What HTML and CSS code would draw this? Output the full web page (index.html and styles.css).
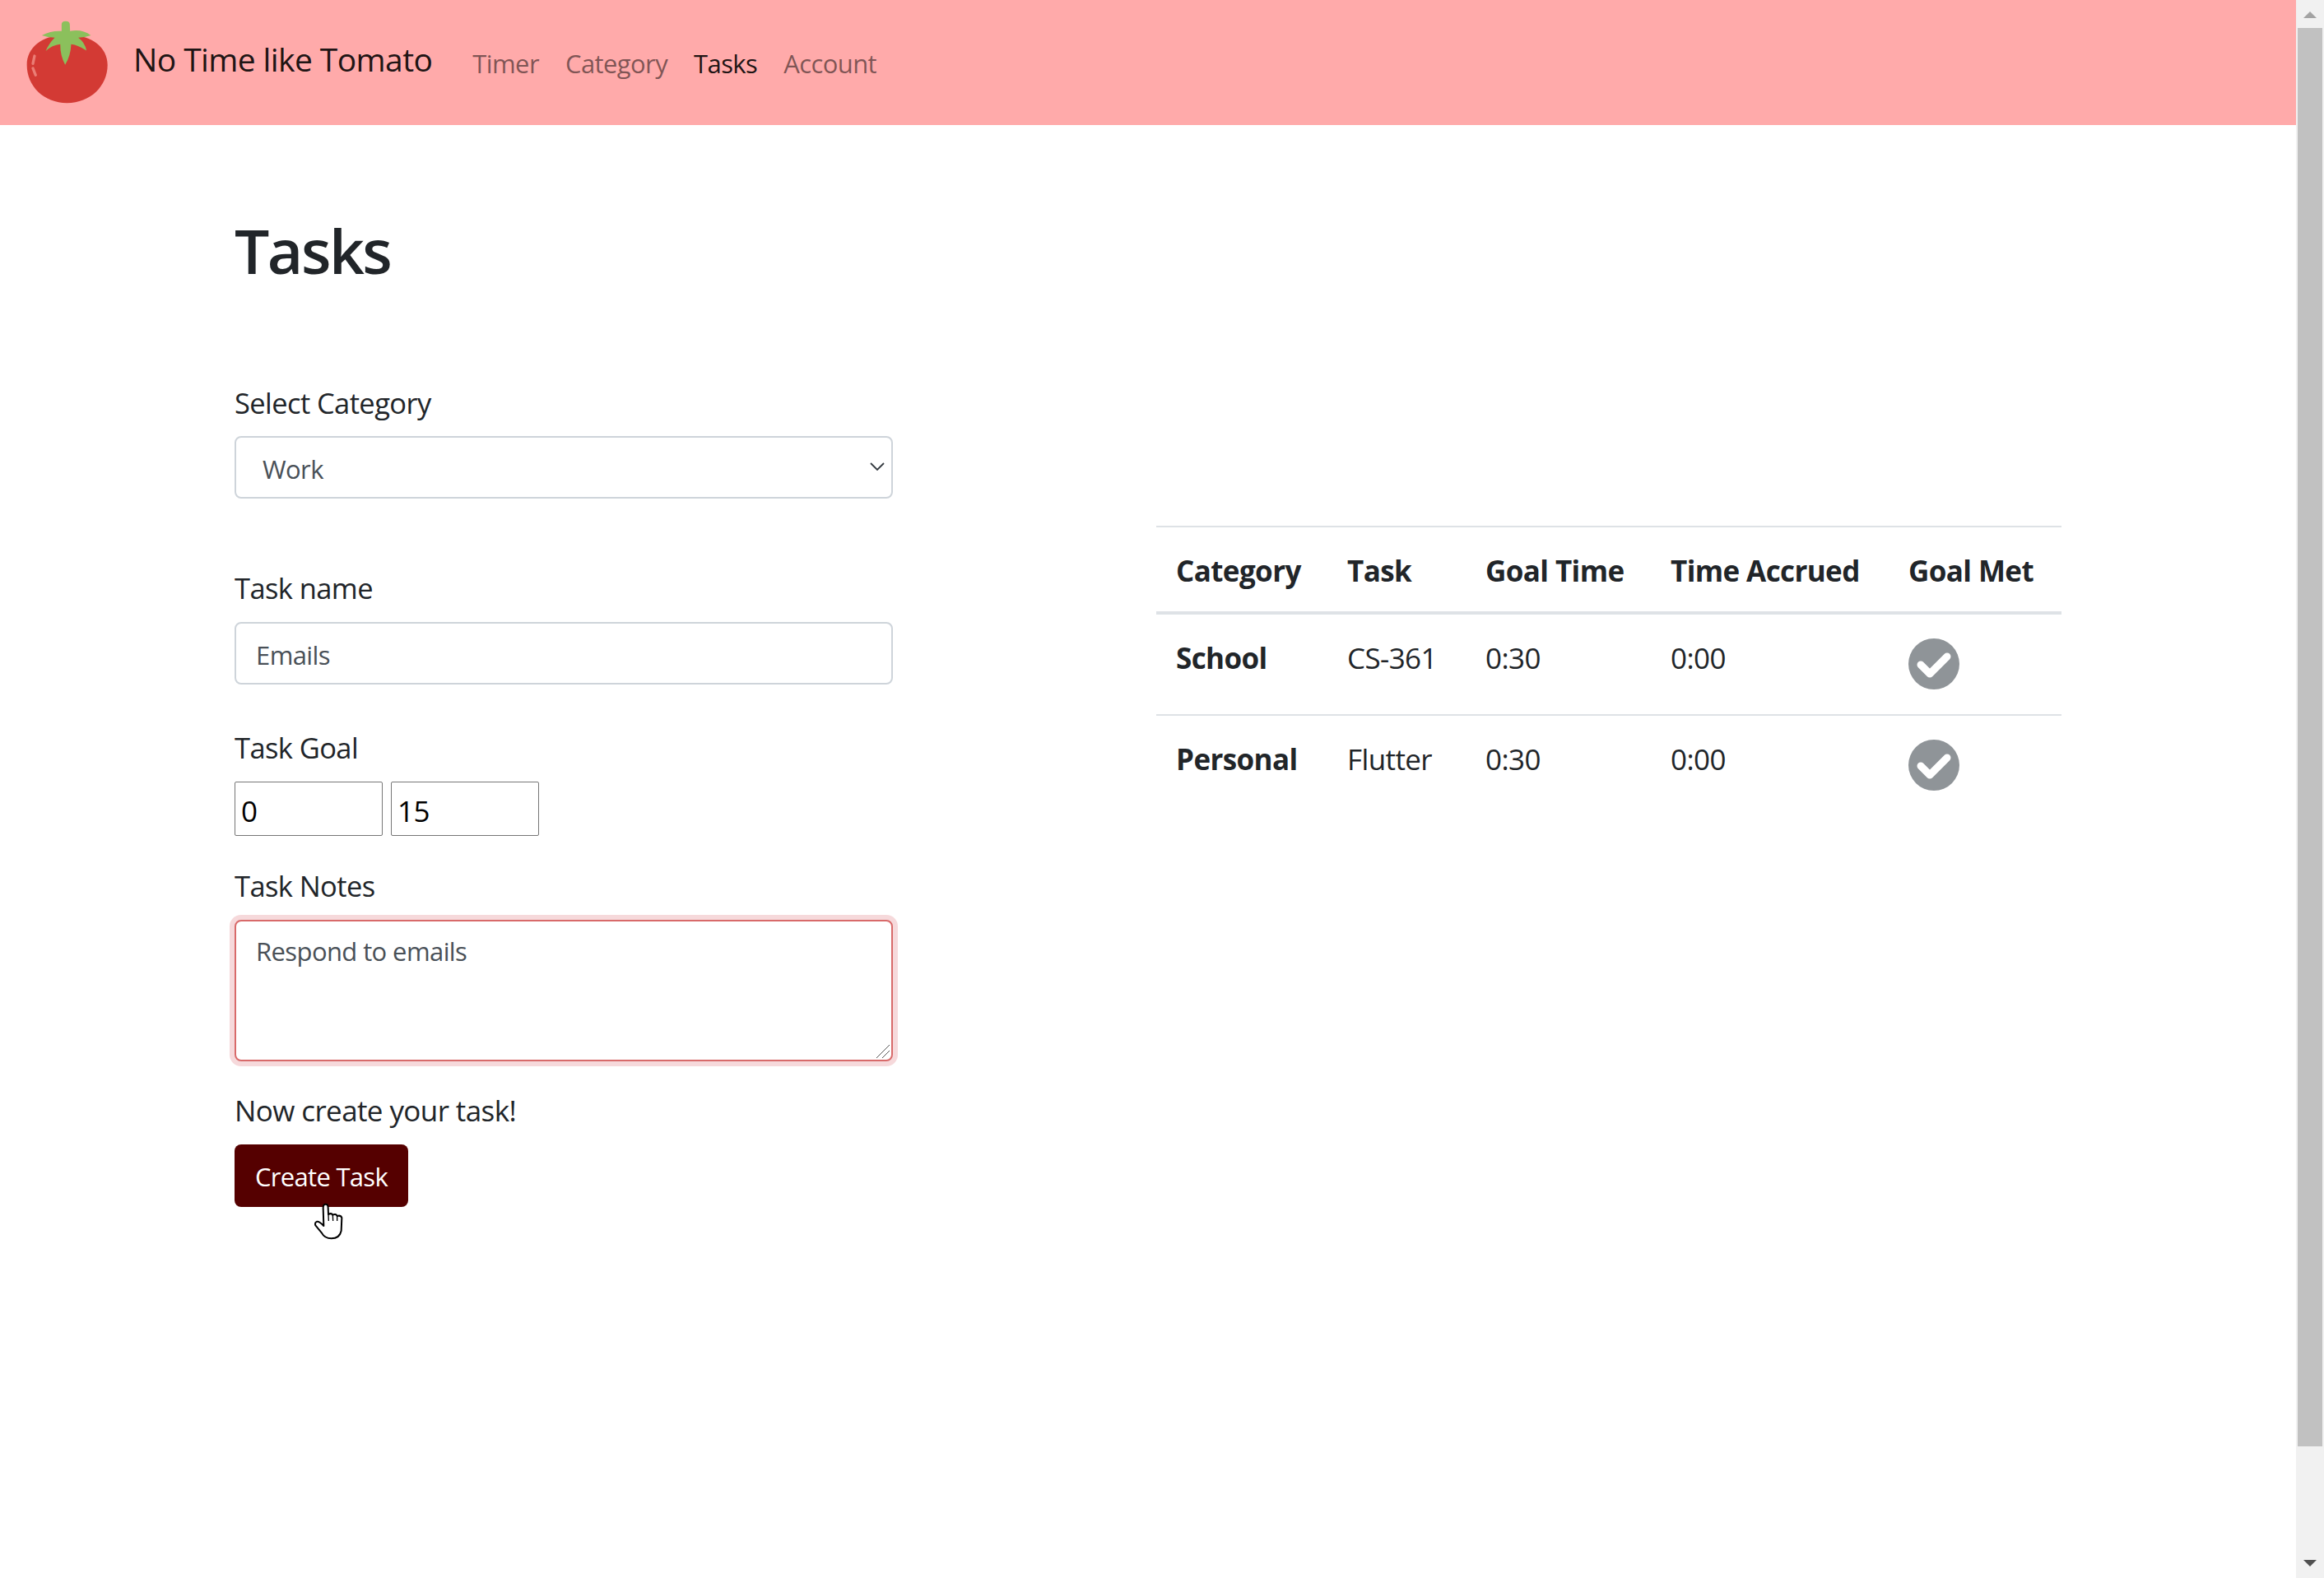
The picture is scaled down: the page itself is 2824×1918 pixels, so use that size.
FILE: index.html
```html
<!DOCTYPE html>
<html lang="en">
<head>
  <meta charset="UTF-8">
  <title>No Time like Tomato</title>
  <link rel="stylesheet" href="styles.css">
</head>
<body>

  <div class="page">
    <nav class="navbar">
      <svg class="logo" viewBox="30 40 310 315">
        <path d="M185 100 C270 95 333 140 333 208 C333 285 270 347 185 347 C100 347 38 285 38 208 C38 140 100 95 185 100 Z" fill="#d33a34"/>
        <path d="M66 175 L60 203 M60 220 L70 245" stroke="#ea7d75" stroke-width="10" stroke-linecap="round" fill="none"/>
        <path d="M165 60 Q165 48 180 48 Q195 48 195 60 L196 84 Q240 76 272 100 Q250 108 226 108 Q250 125 256 155 Q225 135 200 132 Q198 175 178 207 Q160 175 160 132 Q130 135 107 157 Q118 130 140 108 Q115 108 93 100 Q125 82 165 84 Z" fill="#8bc05c"/>
      </svg>
      <a class="brand" href="#">No Time like Tomato</a>
      <ul class="nav-links">
        <li><a href="#">Timer</a></li>
        <li><a href="#">Category</a></li>
        <li><a class="active" href="#">Tasks</a></li>
        <li><a href="#">Account</a></li>
      </ul>
    </nav>

    <main class="content">
      <section class="task-form">
        <h1>Tasks</h1>

        <label class="field-label">Select Category</label>
        <div class="select-wrap">
          <select class="form-control select-control">
            <option>Work</option>
          </select>
          <svg class="chevron" viewBox="0 0 18 10"><path d="M1 1 L9 9 L17 1" fill="none" stroke="#343a40" stroke-width="1.8"/></svg>
        </div>

        <label class="field-label name-label">Task name</label>
        <input class="form-control" type="text" value="Emails">

        <label class="field-label goal-label">Task Goal</label>
        <div class="goal-row">
          <input class="goal-input" type="text" value="0">
          <input class="goal-input" type="text" value="15">
        </div>

        <label class="field-label notes-label">Task Notes</label>
        <div class="notes-wrap">
          <textarea class="form-control notes">Respond to emails</textarea>
          <svg class="resizer" viewBox="0 0 18 18"><path d="M1 17 L17 1 M8 17 L17 8" stroke="#555" stroke-width="1" fill="none"/></svg>
        </div>

        <p class="create-hint">Now create your task!</p>
        <div class="button-wrap">
          <button class="create-btn" type="button">Create Task</button>
          <svg class="cursor" viewBox="125 130 108 135">
            <path d="M160 148 Q160 135 169 135 Q178 135 178 148 L179 172 Q190 166 195 174 Q206 168 211 178 Q224 174 228 184 L226 232 Q220 260 190 260 Q165 260 155 240 L132 212 Q128 202 138 198 Q148 198 162 214 Z" fill="#fff" stroke="#000" stroke-width="6" stroke-linejoin="round"/>
            <path d="M179 172 L180 196 M195 174 L196 196 M211 178 L211 196" stroke="#000" stroke-width="4" fill="none"/>
          </svg>
        </div>
      </section>

      <section class="task-list">
        <table class="task-table">
          <thead>
            <tr>
              <th class="col-category">Category</th>
              <th class="col-task">Task</th>
              <th class="col-goal">Goal Time</th>
              <th class="col-accrued">Time Accrued</th>
              <th class="col-met">Goal Met</th>
            </tr>
          </thead>
          <tbody>
            <tr>
              <th>School</th>
              <td>CS-361</td>
              <td>0:30</td>
              <td>0:00</td>
              <td>
                <svg class="check" viewBox="0 0 62 62"><circle cx="31" cy="31" r="31" fill="#8f9498"/><path d="M15 32 L26 43 L47 22" fill="none" stroke="#fff" stroke-width="9" stroke-linecap="round" stroke-linejoin="round"/></svg>
              </td>
            </tr>
            <tr>
              <th>Personal</th>
              <td>Flutter</td>
              <td>0:30</td>
              <td>0:00</td>
              <td>
                <svg class="check" viewBox="0 0 62 62"><circle cx="31" cy="31" r="31" fill="#8f9498"/><path d="M15 32 L26 43 L47 22" fill="none" stroke="#fff" stroke-width="9" stroke-linecap="round" stroke-linejoin="round"/></svg>
              </td>
            </tr>
          </tbody>
        </table>
      </section>
    </main>
  </div>

  <div class="scrollbar">
    <div class="arrow-up"></div>
    <div class="thumb"></div>
    <div class="arrow-down"></div>
  </div>

</body>
</html>
```

FILE: styles.css
```css
* { box-sizing: border-box; }
html, body { height: 100%; }
body { margin: 0; display: flex; height: 1918px; overflow: hidden; font-family: "Open Sans", "Noto Sans", sans-serif; font-size: 31px; line-height: 48px; letter-spacing: -0.6px; color: #212529; background: #fff; }
.page { flex: 1; min-width: 0; }

.navbar { display: flex; height: 152px; background: #ffaaaa; padding-left: 30px; }
.logo { width: 103px; height: 105px; margin-top: 23px; }
.brand { margin: 44px 0 0 29px; font-size: 39px; line-height: 56px; color: rgba(0,0,0,.9); text-decoration: none; }
.nav-links { display: flex; gap: 32px; list-style: none; margin: 53px 0 0 49px; padding: 0; }
.nav-links a { color: rgba(0,0,0,.5); text-decoration: none; }
.nav-links a.active { color: rgba(0,0,0,.9); }

.content { display: flex; gap: 320px; padding: 105px 0 0 285px; }
.task-form { width: 800px; flex: none; }
h1 { margin: 0 0 113px; font-size: 75px; line-height: 94px; font-weight: 600; letter-spacing: -2.5px; padding-bottom: 2px; }

.field-label { display: block; margin-bottom: 16px; font-size: 34.5px; }
.name-label { margin-top: 85px; margin-bottom: 17px; }
.goal-label { margin-top: 53px; margin-bottom: 17px; }
.notes-label { margin-top: 37px; margin-bottom: 17px; }

.form-control { display: block; width: 800px; height: 76px; padding: 14px 24px 10px; font: inherit; letter-spacing: inherit; color: #495057; background: #fff; border: 2px solid #ced4da; border-radius: 8px; }
.select-wrap { position: relative; }
.select-control { appearance: none; padding-left: 32px; }
.chevron { position: absolute; right: 10px; top: 32px; width: 18px; height: 10px; }

.goal-row { display: flex; gap: 10px; }
.goal-input { width: 180px; height: 66px; padding: 4px 7px 0; font: inherit; font-size: 35px; letter-spacing: inherit; color: #000; border: 1px solid #767676; border-radius: 2px; }

.notes-wrap { position: relative; }
.notes { height: 172px; padding-top: 12px; resize: none; border-color: #d86a6a; box-shadow: 0 0 0 6px #f6d9db; outline: none; }
.resizer { position: absolute; right: 3px; bottom: 3px; width: 18px; height: 18px; }

.create-hint { margin: 36px 0 17px; font-size: 35px; }
.button-wrap { position: relative; }
.create-btn { display: block; width: 211px; height: 76px; padding: 2px 0 0; font: inherit; letter-spacing: -0.7px; color: #fff; background: #550000; border: 0; border-radius: 8px; }
.cursor { position: absolute; left: 96px; top: 71px; width: 36px; height: 45px; }

.task-list { width: 1100px; flex: none; margin-top: 382px; }
.task-table { width: 1100px; table-layout: fixed; border-collapse: collapse; font-size: 35px; }
.task-table th, .task-table td { padding: 29px 24px 19px; text-align: left; vertical-align: top; border-top: 2px solid #dee2e6; height: 124px; }
.task-table th { font-weight: 700; }
.task-table thead th { height: 105px; border-bottom: 4px solid #dee2e6; }
.col-category { width: 208px; }
.col-task { width: 168px; }
.col-goal { width: 225px; }
.col-accrued { width: 289px; }
.col-met { width: 210px; }
.check { display: block; width: 62px; height: 62px; }

.scrollbar { position: relative; flex: none; width: 34px; background: #f1f1f1; }
.arrow-up { position: absolute; left: 9px; top: 14px; border-left: 8px solid transparent; border-right: 8px solid transparent; border-bottom: 8px solid #a3a3a3; }
.thumb { position: absolute; left: 2px; top: 34px; width: 30px; height: 1724px; background: #c1c1c1; }
.arrow-down { position: absolute; left: 9px; top: 1896px; border-left: 8px solid transparent; border-right: 8px solid transparent; border-top: 8px solid #505050; }
```
